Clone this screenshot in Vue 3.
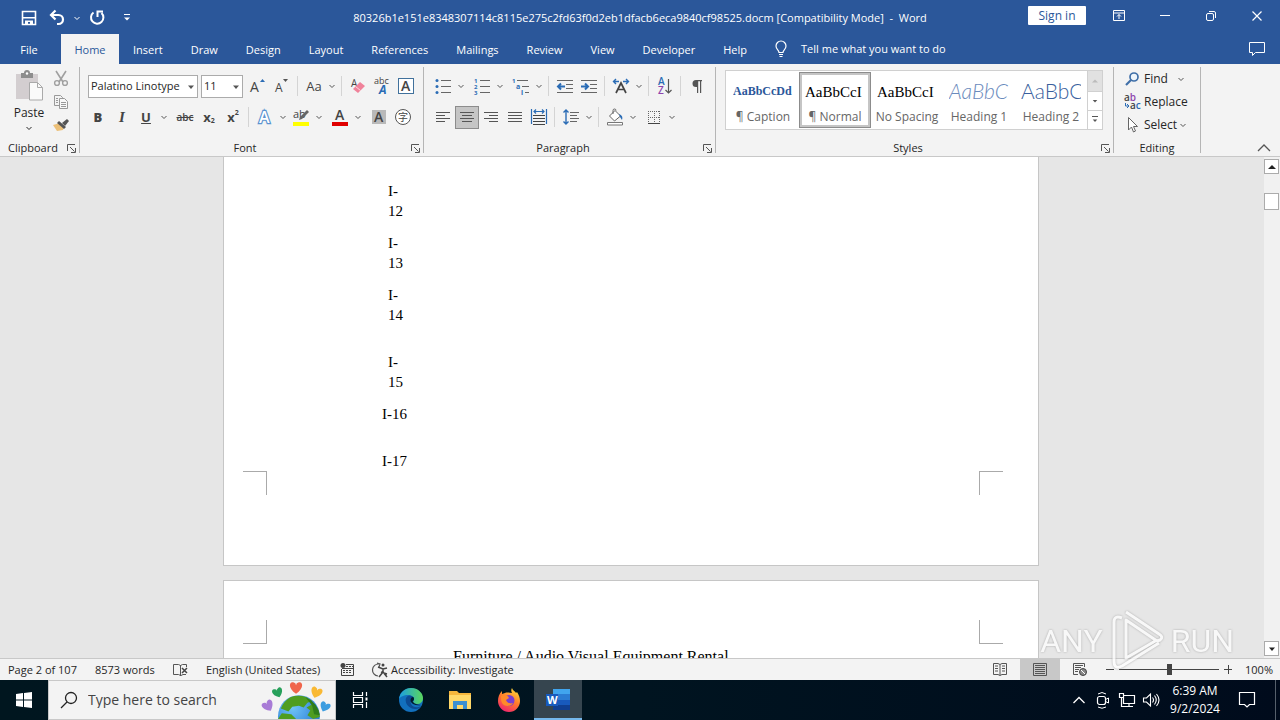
<template>
  <div class="word-app">
    <!-- Gradients stay in a rendered svg, the symbols do not need one -->
    <svg class="paints" aria-hidden="true">
      <defs>
        <radialGradient id="sea" cx=".35" cy=".3" r=".8"><stop offset="0" stop-color="#6fc4f7" /><stop offset="1" stop-color="#1f6fd0" /></radialGradient>
        <linearGradient id="edge-top"><stop offset="0" stop-color="#1b9de2" /><stop offset="1" stop-color="#5bd75c" /></linearGradient>
        <linearGradient id="fox" x1=".8" y1="0" x2=".3" y2="1"><stop offset="0" stop-color="#ffe03a" /><stop offset=".5" stop-color="#ff7a2b" /><stop offset="1" stop-color="#f0246f" /></linearGradient>
      </defs>
    </svg>

    <!-- Shared icon shapes -->
    <svg class="sprite" aria-hidden="true">
      <symbol id="chev" viewBox="0 0 8 8"><path d="M1.5 3 4 5.500 6.500 3" fill="none" stroke="currentColor" /></symbol>
      <symbol id="caret" viewBox="0 0 8 8"><path d="M1 2.500h6L4 6z" fill="currentColor" /></symbol>
      <symbol id="caret-up" viewBox="0 0 8 8"><path d="M0 6h8L4 2z" fill="currentColor" /></symbol>
      <symbol id="launcher" viewBox="0 0 9 9">
        <path d="M.5 7V.5H8M3 3l4.500 4.500M8.500 4v4.500H4" fill="none" stroke="#555" />
      </symbol>

      <symbol id="save" viewBox="0 0 20 20">
        <path d="M3.500 3.500h13v13h-13z" fill="none" stroke="#fff" stroke-width="1.600" />
        <path d="M4 9h12v1.600H4zM6 12.500h8V16h-3v-2H9v2H6z" fill="#fff" />
      </symbol>
      <symbol id="undo" viewBox="0 0 20 20">
        <path d="M8.500 2.500 4 7l4.500 4.500M4.500 7h7a4.500 4.500 0 0 1 0 9H10" fill="none" stroke="#fff" stroke-width="2.200" />
      </symbol>
      <symbol id="redo" viewBox="0 0 20 20">
        <path d="M6.500 4.500a6.200 6.200 0 1 0 8 .500M10.500 9V3.500H16" fill="none" stroke="#fff" stroke-width="2" />
      </symbol>
      <symbol id="customise" viewBox="0 0 8 8"><path d="M1 .5h6" stroke="#fff" /><path d="M1 3.500h6L4 6.500z" fill="#fff" /></symbol>

      <symbol id="ribbon-opts" viewBox="0 0 20 20">
        <path d="M4.500 4.500h11v10h-11zM4.500 7h11M10 13V8.500M8 10.500l2-2 2 2" fill="none" stroke="#fff" />
      </symbol>
      <symbol id="minimise" viewBox="0 0 20 20"><path d="M5 9.500h10" stroke="#fff" /></symbol>
      <symbol id="restore" viewBox="0 0 20 20">
        <rect x="5.500" y="7.500" width="7" height="7" rx="1.500" fill="none" stroke="#fff" />
        <path d="M8 5.500h5a1.500 1.500 0 0 1 1.500 1.500v5" fill="none" stroke="#fff" />
      </symbol>
      <symbol id="close" viewBox="0 0 20 20"><path d="m5.500 5.500 9 9m0-9-9 9" stroke="#fff" stroke-width="1.200" /></symbol>
      <symbol id="bulb" viewBox="0 0 20 20">
        <path d="M8 13.500c0-2.500-3-3-3-6.500a5 5 0 0 1 10 0c0 3.500-3 4-3 6.500zM8 15.500h4M8.500 17.500h3" fill="none" stroke="#fff" stroke-width="1.200" />
      </symbol>
      <symbol id="comment" viewBox="0 0 20 20">
        <path d="M2.500 3.500h15v10h-9l-3 3v-3h-3z" fill="none" stroke="#fff" />
      </symbol>

      <symbol id="paste" viewBox="0 0 30 32">
        <path d="M2 4h22v25H2z" fill="#d3ced0" />
        <path d="M7 3h3a3 3 0 0 1 6 0h3v5H7z" fill="#8d8d8d" />
        <circle cx="13" cy="3.500" r="1.200" fill="#fff" />
        <path d="M15.500 12.500h8l5 5v12.500h-13z" fill="#fafafa" stroke="#aaa" />
        <path d="M23.500 12.500v5h5" fill="none" stroke="#aaa" />
      </symbol>
      <symbol id="cut" viewBox="0 0 20 20">
        <path d="m5 2 7 11m3-11L8 13" stroke="#a0a0a0" stroke-width="1.600" />
        <circle cx="6" cy="14" r="2.400" fill="none" stroke="#a0a0a0" stroke-width="1.400" />
        <circle cx="14" cy="14" r="2.400" fill="none" stroke="#a0a0a0" stroke-width="1.400" />
      </symbol>
      <symbol id="copy" viewBox="0 0 20 20">
        <path d="M3.500 3.500h6l2 2v8h-8z" fill="#f3f3f3" stroke="#999" />
        <path d="M8.500 6.500h5l3 3v7h-8z" fill="#f8f8f8" stroke="#999" />
        <path d="M5 6.500h2M5 8.500h2M5 10.500h2M10 10.500h5M10 12.500h5M10 14.500h5" stroke="#999" />
      </symbol>
      <symbol id="painter" viewBox="0 0 20 20">
        <path d="m2 10 4 6 6-1 1-4-4-3z" fill="#ecc078" />
        <path d="m8 6 7 6-2 2-7-6z" fill="#555" />
        <path d="m11 8 5-4 2 2-4 5z" fill="#555" />
      </symbol>

      <symbol id="grow" viewBox="0 0 20 20">
        <text x="2" y="16" font-size="14" fill="#444">A</text><path d="M12 6h5l-2.500-3z" fill="#2b6cb5" />
      </symbol>
      <symbol id="shrink" viewBox="0 0 20 20">
        <text x="3" y="16" font-size="12" fill="#444">A</text><path d="M11 3h5l-2.500 3z" fill="#555" />
      </symbol>
      <symbol id="clear" viewBox="0 0 20 20">
        <text x="3" y="11" font-size="10" fill="#444">A</text>
        <path d="m12 6 5 4-7 7-5-4z" fill="#f0829a" />
        <path d="m7.500 10.500 5 4" stroke="#fbd5dc" />
      </symbol>
      <symbol id="phonetic" viewBox="0 0 20 20">
        <text x="2" y="8" font-size="9" fill="#444">abc</text>
        <text x="7" y="18" font-size="12" font-weight="700" font-style="italic" fill="#2b6cb5">A</text>
      </symbol>
      <symbol id="char-border" viewBox="0 0 20 20">
        <rect x="2.500" y="2.500" width="15" height="15" fill="#fff" stroke="#41719c" />
        <text x="5" y="15" font-size="14" font-weight="600" fill="#444">A</text>
      </symbol>
      <symbol id="effects" viewBox="0 0 20 20">
        <text x="4" y="16" font-size="16" font-weight="600" fill="#fff" stroke="#5b93d0" stroke-width="2.400" paint-order="stroke">A</text>
      </symbol>
      <symbol id="highlight" viewBox="0 0 20 20">
        <text x="2" y="11" font-size="11" fill="#444">ab</text>
        <path d="m8 13 1-3 7-7 2 2-7 7z" fill="#666" /><path d="M2 15h16v4H2z" fill="#ff0" />
      </symbol>
      <symbol id="font-colour" viewBox="0 0 20 20">
        <text x="5" y="13" font-size="14" font-weight="600" fill="#444">A</text><path d="M2 15h16v4H2z" fill="#e00000" />
      </symbol>
      <symbol id="shading" viewBox="0 0 20 20">
        <path d="M3 3h14v14H3z" fill="#b9b9b9" /><text x="5" y="15" font-size="14" font-weight="600" fill="#444">A</text>
      </symbol>
      <symbol id="enclose" viewBox="0 0 20 20">
        <circle cx="10" cy="10" r="7.500" fill="#fff" stroke="#555" /><text x="5" y="14" font-size="10" fill="#444">字</text>
      </symbol>

      <symbol id="bullets" viewBox="0 0 20 20">
        <path d="M8 4.500h10M8 10.500h10M8 16.500h10" stroke="#666" />
        <circle cx="4" cy="4.500" r="1.500" fill="#2b6cb5" /><circle cx="4" cy="10.500" r="1.500" fill="#2b6cb5" /><circle cx="4" cy="16.500" r="1.500" fill="#2b6cb5" />
      </symbol>
      <symbol id="numbers" viewBox="0 0 20 20">
        <path d="M8 4.500h10M8 10.500h10M8 16.500h10" stroke="#666" />
        <text x="2" y="7" font-size="6" font-weight="700" fill="#2b6cb5">1</text>
        <text x="2" y="13" font-size="6" font-weight="700" fill="#2b6cb5">2</text>
        <text x="2" y="19" font-size="6" font-weight="700" fill="#2b6cb5">3</text>
      </symbol>
      <symbol id="multi" viewBox="0 0 20 20">
        <path d="M6 4.500h11M11 10.500h7M14 16.500h4" stroke="#666" />
        <text x="1" y="7" font-size="6" font-weight="700" fill="#2b6cb5">1</text>
        <text x="5" y="13" font-size="7" font-weight="700" fill="#2b6cb5">a</text>
        <text x="10" y="19" font-size="7" font-weight="700" fill="#2b6cb5">i</text>
      </symbol>
      <symbol id="outdent" viewBox="0 0 20 20">
        <path d="M2 4.500h16M11 8.500h7M11 12.500h7M2 16.500h16" stroke="#666" />
        <path d="M10 10.500H3.500M6 7.500l-3 3 3 3" fill="none" stroke="#2b6cb5" stroke-width="2" />
      </symbol>
      <symbol id="indent" viewBox="0 0 20 20">
        <path d="M2 4.500h16M11 8.500h7M11 12.500h7M2 16.500h16" stroke="#666" />
        <path d="M2 10.500h6.500M6 7.500l3 3-3 3" fill="none" stroke="#2b6cb5" stroke-width="2" />
      </symbol>
      <symbol id="asian" viewBox="0 0 20 20">
        <path d="m5 17 5-10 5 10M7 13.500h6" fill="none" stroke="#444" stroke-width="1.700" />
        <path d="M8 5.500H3M5 3 2.500 5.500 5 8M12 5.500h5M15 3l2.500 2.500L15 8" fill="none" stroke="#2b6cb5" stroke-width="1.400" />
      </symbol>
      <symbol id="sort" viewBox="0 0 20 20">
        <text x="3" y="9" font-size="10" font-weight="600" fill="#2b6cb5">A</text>
        <text x="3" y="18" font-size="10" font-weight="600" fill="#8e44ad">Z</text>
        <path d="M13.500 3v14M10.500 14l3 3 3-3" fill="none" stroke="#555" stroke-width="1.200" />
      </symbol>
      <symbol id="pilcrow" viewBox="0 0 20 20">
        <path d="M15 4H9a3.500 3.500 0 0 0 0 7h1v6h1.200V5.200H13V17h1.200V5.200H15z" fill="#555" />
      </symbol>
      <symbol id="left" viewBox="0 0 20 20"><path d="M3 5.500h14M3 8.500h9M3 11.500h14M3 14.500h9" stroke="#555" /></symbol>
      <symbol id="center" viewBox="0 0 20 20"><path d="M3 5.500h14M5 8.500h10M3 11.500h14M5 14.500h10" stroke="#555" /></symbol>
      <symbol id="right" viewBox="0 0 20 20"><path d="M3 5.500h14M8 8.500h9M3 11.500h14M8 14.500h9" stroke="#555" /></symbol>
      <symbol id="justify" viewBox="0 0 20 20"><path d="M3 5.500h14M3 8.500h14M3 11.500h14M3 14.500h14" stroke="#555" /></symbol>
      <symbol id="distribute" viewBox="0 0 20 20">
        <path d="M2.500 2v15M17.500 2v15M5 4.500h10M7 2.500l-2 2 2 2M13 2.500l2 2-2 2" fill="none" stroke="#2b6cb5" stroke-width="1.200" />
        <path d="M4 8.500h12M4 11.500h12M4 14.500h12M4 17.500h12" stroke="#444" />
      </symbol>
      <symbol id="spacing" viewBox="0 0 20 20">
        <path d="M9 5.500h9M9 8.500h7M9 11.500h9M9 14.500h7" stroke="#666" />
        <path d="M5 3v14M2.500 5.500 5 3l2.500 2.500M2.500 14.500 5 17l2.500-2.500" fill="none" stroke="#2b6cb5" stroke-width="1.400" />
      </symbol>
      <symbol id="bucket" viewBox="0 0 20 20">
        <path d="m4.500 9 5.500-5.500 5.500 5.500-6 5z" fill="#fff" stroke="#666" /><path d="M8 7V3.500a1.500 1.500 0 0 1 3 0" fill="none" stroke="#666" />
        <path d="M14 7c3 1 4 3 3 6l-2-3z" fill="#2b6cb5" /><path d="M2.500 15.500h15v2.500h-15z" fill="#fff" stroke="#777" />
      </symbol>
      <symbol id="borders" viewBox="0 0 20 20">
        <path d="M4 4.500h12M4 10.500h12M4.500 4v13M10.500 4v13M15.500 4v13" stroke="#666" stroke-dasharray="1 1" /><path d="M4 16.500h12" stroke="#444" />
      </symbol>

      <symbol id="find" viewBox="0 0 20 20">
        <circle cx="12" cy="8" r="4" fill="#eef5fb" stroke="#3f6fa8" stroke-width="1.700" /><path d="m9 11-5 5" stroke="#3f6fa8" stroke-width="2.200" />
      </symbol>
      <symbol id="replace" viewBox="0 0 20 20">
        <text x="2" y="9" font-size="10" font-weight="600" fill="#444">a<tspan fill="#8e44ad">b</tspan></text>
        <text x="8" y="17" font-size="10" font-weight="600" fill="#444">a<tspan fill="#2b6cb5">c</tspan></text>
        <path d="M3.500 11v3h3M5 12l2 2-2 2" fill="none" stroke="#2b6cb5" />
      </symbol>
      <symbol id="select" viewBox="0 0 20 20">
        <path d="M6.500 2.500v12.500l3-3 2 5 2-1-2-4.500h4z" fill="#fff" stroke="#666" />
      </symbol>
      <symbol id="collapse" viewBox="0 0 16 10"><path d="m2 8 6-6 6 6" fill="none" stroke="#555" stroke-width="1.300" /></symbol>

      <symbol id="proof" viewBox="0 0 20 20">
        <path d="M9.500 5v11M9.500 15.500l-2-1h-5v-10h5l2 1 2-1h4V7" fill="none" stroke="#555" /><path d="m11 8 5 5m0-5-5 5" stroke="#444" stroke-width="1.500" />
        <path d="M10 15.500l2-1h3" stroke="#555" fill="none" />
      </symbol>
      <symbol id="macro" viewBox="0 0 20 20">
        <circle cx="6" cy="5.500" r="2.500" fill="#444" />
        <path d="M9 4.500h7.500v11h-12V9M5 8.500h11" fill="none" stroke="#444" /><path d="M6 10.500h9M6 12.500h9M9 6.500h7" stroke="#444" stroke-dasharray="2 1" />
      </symbol>
      <symbol id="a11y" viewBox="0 0 20 20">
        <path d="M8 4a6 6 0 0 0-1 12M6 3l3 1-1 3" fill="none" stroke="#555" stroke-width="1.200" />
        <circle cx="12" cy="5" r="1.500" fill="#444" />
        <path d="m7 7 5 2 4-1M12 9v3M8 17l4-5 4 5M10 12l6 2" fill="none" stroke="#444" stroke-width="1.500" />
      </symbol>
      <symbol id="read" viewBox="0 0 20 20">
        <path d="M10 4.500v11l-2-1H3.500v-11H8l2 1 2-1h4.500v11H12l-2 1M5 6h3M5 8.500h3M5 11h3M12 6h3M12 8.500h3M12 11h3" fill="none" stroke="#555" />
      </symbol>
      <symbol id="print" viewBox="0 0 20 20">
        <path d="M3.500 3.500h13v12h-13zM5 5.500h10M5 7.500h10M5 9.500h10M5 11.500h10M5 13.500h10" fill="none" stroke="#555" />
      </symbol>
      <symbol id="web" viewBox="0 0 20 20">
        <path d="M8 14.500H3.500v-11h11V7M5 5.500h8M5 7.500h6M5 9.500h4M5 11.500h3" fill="none" stroke="#555" />
        <circle cx="13" cy="12" r="3.500" fill="#888" stroke="#444" /><path d="m11 10 4 4" stroke="#fff" />
      </symbol>

      <symbol id="windows" viewBox="0 0 16 16"><path d="m0 2 7-1v6.500H0zM8 1l8-1v7.500H8zM0 8.500h7V15l-7-1zM8 8.500h8V16l-8-1z" fill="#fff" /></symbol>
      <symbol id="magnifier" viewBox="0 0 20 20"><circle cx="12" cy="8" r="5.500" fill="none" stroke="#222" stroke-width="1.300" /><path d="m8 12-6 6" stroke="#222" stroke-width="1.300" /></symbol>
      <symbol id="globe" viewBox="0 0 76 40">
        <defs>
          <path id="heart" d="M0 4.500C-8-1-5.500-6.500-2.500-5.500Q0-5 0-3 0-5 2.500-5.500C5.500-6.500 8-1 0 4.500z" />
        </defs>
        <circle cx="40" cy="37" r="22" fill="url(#sea)" />
        <path d="M31 17q8-3 17 0l6 4-5 2-4 5-5-2-7 1-4 5-8-3q3-8 10-12zM55 24q7 6 7 14l-7 2-6-4 3-5-4-3zM22 34l10 1 5 5H18z" fill="#4f9d20" />
        <path d="M47 17q13 6 15 19l-6-1-2-9z" fill="#2f7d1b" />
        <use href="#heart" transform="translate(37 8) scale(1.200)" fill="#f0654c" />
        <use href="#heart" transform="translate(18 13) rotate(-20)" fill="#27a05a" />
        <use href="#heart" transform="translate(58 13) rotate(20) scale(1.100)" fill="#f9b934" />
        <use href="#heart" transform="translate(8 27) rotate(-30) scale(1.100)" fill="#a87bd6" />
        <use href="#heart" transform="translate(67 28) rotate(25)" fill="#3c9de0" />
      </symbol>
      <symbol id="taskview" viewBox="0 0 20 20">
        <path d="M3.500 2v3.500h9V2M3.500 18v-3.500h9V18M3.500 7.500h9v5h-9zM16.500 2v4M16.500 12v6" fill="none" stroke="#fff" stroke-width="1.200" /><path d="M15.500 7.500h2v3h-2z" fill="#fff" />
      </symbol>
      <symbol id="edge" viewBox="0 0 24 24">
        <circle cx="12" cy="12" r="12" fill="#1270bd" />
        <path d="M0 11C1 4 6 0 12 0c7 0 12 5 12 10 0 4-3 6-6 6-2 0-4-1-4-2 1-1 1-2 1-3 0-2-3-4-6-4-4 0-8 2-9 4z" fill="url(#edge-top)" />
        <path d="M15 11c0-2-2-3.500-5-3.500-3 1-4 3.500-3 7s5 6.500 9 6.500 5-1 6-3c-3 2-8 2-10-2-1-2 0-4 3-5z" fill="#0c4b93" />
        <path d="M14 14c-1-1 1-1 1-3 0-1-.5-1.700-1-2-2 0-3 3-2 5s5 4 10 3c-3-.2-6-.500-8-3z" fill="#001a2c" />
      </symbol>
      <symbol id="explorer" viewBox="0 0 24 24">
        <path d="M1 3h8l2 2h12v16H1z" fill="#f5b63c" /><path d="M1 7h22v14H1z" fill="#ffd869" />
        <path d="M5 13h14v8h-4v-4H9v4H5z" fill="#3c8fd0" />
      </symbol>
      <symbol id="firefox" viewBox="0 0 24 24">
        <path d="M15 0c1 3 3 3 4 5l1-1c2 3 3 6 3 9a11 11 0 0 1-22 0c0-4 1-7 4-10v3l3-1c2-1 5 0 7 0-1-2-1-3 0-5z" fill="url(#fox)" />
        <circle cx="12" cy="12.500" r="5.500" fill="#7a3fd0" />
        <path d="M4 8c3-2 7-1 8 2l-3 2c1 3 4 4 7 3-2 4-9 4-11 0-1-2-1-4-1-7z" fill="#ff8a2a" />
      </symbol>
      <symbol id="word" viewBox="0 0 24 24">
        <path d="M7 1h17v6H7z" fill="#41a5ee" /><path d="M7 6h17v6H7z" fill="#2b7cd3" /><path d="M7 12h17v5H7z" fill="#185abd" /><path d="M7 17h17v5H7z" fill="#103f91" />
        <path d="M0 6h12v12H0z" fill="#185abd" /><text x="1" y="16" font-size="11" font-weight="700" fill="#fff">W</text>
      </symbol>
      <symbol id="tray-up" viewBox="0 0 20 20"><path d="m4.500 13 5.500-5.500 5.500 5.500" fill="none" stroke="#fff" stroke-width="1.300" /></symbol>
      <symbol id="meet" viewBox="0 0 20 20">
        <rect x="4.500" y="6.500" width="8" height="8" rx="2" fill="none" stroke="#fff" stroke-width="1.200" />
        <path d="m12.500 9.500 3-1.500v5l-3-1.500M5 4q4-3 8 0M5 17q4 2.500 8 0" fill="none" stroke="#fff" />
      </symbol>
      <symbol id="network" viewBox="0 0 20 20">
        <path d="M7 5.500h10.500v8h-11V8M9 16.500h7M12 13.500v3M2.500 3.500h4v4h-4zM4.500 7.500v9H9" fill="none" stroke="#fff" stroke-width="1.200" />
      </symbol>
      <symbol id="volume" viewBox="0 0 20 20">
        <path d="M2.500 8v4h3l4 4V4l-4 4zM11.500 7.500q2 2.500 0 5M13.500 5.500q3.500 4.500 0 9M15.500 4q5 6 0 12" fill="none" stroke="#fff" stroke-width="1.100" />
      </symbol>
      <symbol id="notify" viewBox="0 0 20 20"><path d="M2.500 2.500h15v12h-5L10 17l-2.500-2.500h-5z" fill="none" stroke="#fff" stroke-width="1.200" /></symbol>
      <symbol id="play" viewBox="0 0 56 64">
        <path d="M17 3 50 25q5 3 1 6L48 32 17 11v38L48 31" fill="none" stroke="#fff" stroke-width="3" stroke-linejoin="round" />
        <path d="M13 9q-8-3-8 4v39q0 9 8 5L50 34" fill="none" stroke="#fff" stroke-width="3" stroke-linejoin="round" />
      </symbol>
    </svg>

    <header class="title-bar">
      <div class="quick-access">
        <button class="qa" aria-label="Save"><svg class="i20"><use href="#save" /></svg></button>
        <button class="qa" aria-label="Undo"><svg class="i20"><use href="#undo" /></svg></button>
        <button class="qa-drop" aria-label="Undo list"><svg class="i8"><use href="#chev" /></svg></button>
        <button class="qa" aria-label="Repeat"><svg class="i20"><use href="#redo" /></svg></button>
        <button class="qa more" aria-label="Customize"><svg class="i8"><use href="#customise" /></svg></button>
      </div>
      <h1>{{ fileName }} [Compatibility Mode]&nbsp; -&nbsp; Word</h1>
      <div class="window-actions">
        <button class="sign-in">Sign in</button>
        <button v-for="w in windowButtons" :key="w" class="win" :aria-label="w"><svg class="i20"><use :href="'#' + w" /></svg></button>
      </div>
    </header>

    <nav class="tabs">
      <button v-for="tab in tabs" :key="tab" class="tab" :class="{ active: tab === activeTab, file: tab === 'File' }" @click="activeTab = tab">{{ tab }}</button>
      <button class="tell-me"><svg class="i20"><use href="#bulb" /></svg>Tell me what you want to do</button>
      <button class="comments" aria-label="Comments"><svg class="i20"><use href="#comment" /></svg></button>
    </nav>

    <section class="ribbon">
      <div class="group clipboard">
        <div class="group-body">
          <button class="paste"><svg><use href="#paste" /></svg>Paste<svg class="i8"><use href="#chev" /></svg></button>
          <div class="stack">
            <button v-for="c in ['cut', 'copy', 'painter']" :key="c" class="tool" :aria-label="c"><svg class="i20"><use :href="'#' + c" /></svg></button>
          </div>
        </div>
        <div class="caption"><span>Clipboard</span><button aria-label="Clipboard settings"><svg><use href="#launcher" /></svg></button></div>
      </div>

      <div class="group font">
        <div class="group-body rows">
          <div class="row first">
            <label class="combo name">
              <select aria-label="Font"><option>Palatino Linotype</option></select>
              <svg class="i8"><use href="#caret" /></svg>
            </label>
            <label class="combo size">
              <select aria-label="Font size"><option>11</option></select>
              <svg class="i8"><use href="#caret" /></svg>
            </label>
            <template v-for="(item, i) in fontTop" :key="i">
              <span v-if="item === '|'" class="sep"></span>
              <button v-else-if="item === 'v'" class="drop" aria-label="More"><svg class="i8"><use href="#chev" /></svg></button>
              <button v-else-if="item === 'case'" class="tool case">Aa</button>
              <button v-else class="tool" :aria-label="item"><svg class="i20"><use :href="'#' + item" /></svg></button>
            </template>
          </div>
          <div class="row">
            <button class="tool glyph"><b>B</b></button>
            <button class="tool glyph italic"><i>I</i></button>
            <button class="tool glyph"><u>U</u></button>
            <button class="drop" aria-label="Underline style"><svg class="i8"><use href="#chev" /></svg></button>
            <span class="gap"></span>
            <button class="tool glyph small"><s>abc</s></button>
            <button class="tool glyph">x<sub>2</sub></button>
            <button class="tool glyph">x<sup>2</sup></button>
            <template v-for="(item, i) in fontBottom" :key="i">
              <span v-if="item === '|'" class="sep"></span>
              <span v-else-if="item === ' '" class="gap"></span>
              <button v-else-if="item === 'v'" class="drop" aria-label="More"><svg class="i8"><use href="#chev" /></svg></button>
              <button v-else class="tool" :aria-label="item"><svg class="i20"><use :href="'#' + item" /></svg></button>
            </template>
          </div>
        </div>
        <div class="caption"><span>Font</span><button aria-label="Font settings"><svg><use href="#launcher" /></svg></button></div>
      </div>

      <div class="group paragraph">
        <div class="group-body rows">
          <div v-for="(row, r) in paragraphRows" :key="r" class="row">
            <template v-for="(item, i) in row" :key="i">
              <span v-if="item === '|'" class="sep"></span>
              <span v-else-if="item === ' '" class="gap"></span>
              <button v-else-if="item === 'v'" class="drop" aria-label="More"><svg class="i8"><use href="#chev" /></svg></button>
              <button v-else class="tool" :class="{ pressed: item === 'center' }" :aria-label="item"><svg class="i20"><use :href="'#' + item" /></svg></button>
            </template>
          </div>
        </div>
        <div class="caption"><span>Paragraph</span><button aria-label="Paragraph settings"><svg><use href="#launcher" /></svg></button></div>
      </div>

      <div class="group styles">
        <div class="group-body">
          <div class="gallery">
            <button v-for="s in styleList" :key="s.label" class="style" :class="[s.kind, { chosen: s.label === '¶ Normal' }]">
              <span class="sample">{{ s.sample }}</span><span class="label">{{ s.label }}</span>
            </button>
            <div class="gallery-scroll">
              <button disabled aria-label="Up"><svg class="i8"><use href="#caret-up" /></svg></button>
              <button aria-label="Down"><svg class="i8"><use href="#caret" /></svg></button>
              <button class="all" aria-label="More styles"><svg class="i8"><use href="#caret" /></svg></button>
            </div>
          </div>
        </div>
        <div class="caption"><span>Styles</span><button aria-label="Styles settings"><svg><use href="#launcher" /></svg></button></div>
      </div>

      <div class="group editing">
        <div class="group-body stack">
          <button class="edit find"><svg class="i20"><use href="#find" /></svg><span>Find</span><svg class="i8"><use href="#chev" /></svg></button>
          <button class="edit"><svg class="i20"><use href="#replace" /></svg><span>Replace</span></button>
          <button class="edit"><svg class="i20"><use href="#select" /></svg><span>Select</span><svg class="i8"><use href="#chev" /></svg></button>
        </div>
        <div class="caption plain"><span>Editing</span></div>
      </div>
      <button class="collapse" aria-label="Collapse the ribbon"><svg><use href="#collapse" /></svg></button>
    </section>

    <main class="workspace">
      <div class="canvas">
        <article class="page page-one">
          <ul>
            <li v-for="line in lines" :key="line.text" :class="{ wide: line.wide, single: line.single }">{{ line.text }}</li>
          </ul>
          <div class="marks bottom"><span></span><span></span></div>
        </article>
        <article class="page page-two">
          <div class="marks top"><span></span><span></span></div>
          <p>Furniture / Audio Visual Equipment Rental</p>
        </article>
      </div>
      <div class="scrollbar">
        <button aria-label="Scroll up"><svg class="i8"><use href="#caret-up" /></svg></button>
        <div class="thumb"></div>
        <button aria-label="Scroll down"><svg class="i8"><use href="#caret" /></svg></button>
      </div>
    </main>

    <footer class="status">
      <span class="pages">Page 2 of 107</span>
      <span class="words">8573 words</span>
      <svg class="i20 proof"><use href="#proof" /></svg>
      <span class="language">English (United States)</span>
      <svg class="i20 macro"><use href="#macro" /></svg>
      <button class="access"><svg class="i20"><use href="#a11y" /></svg>Accessibility: Investigate</button>
      <div class="views">
        <button v-for="v in ['read', 'print', 'web']" :key="v" :class="{ on: v === 'print' }" :aria-label="v"><svg class="i20"><use :href="'#' + v" /></svg></button>
      </div>
      <div class="zoom">
        <button class="minus" aria-label="Zoom out"></button>
        <input v-model="zoom" type="range" min="0" max="200" aria-label="Zoom">
        <button class="minus plus" aria-label="Zoom in"></button>
        <span>{{ zoom }}%</span>
      </div>
    </footer>

    <div class="taskbar">
      <button class="start" aria-label="Start"><svg><use href="#windows" /></svg></button>
      <label class="search">
        <svg class="i20"><use href="#magnifier" /></svg>
        <input type="text" placeholder="Type here to search">
        <svg class="globe"><use href="#globe" /></svg>
      </label>
      <button class="app task-view" aria-label="Task view"><svg class="i20"><use href="#taskview" /></svg></button>
      <button v-for="a in apps" :key="a" class="app" :class="{ running: a === 'word' }" :aria-label="a"><svg><use :href="'#' + a" /></svg></button>
      <div class="tray">
        <button v-for="t in ['tray-up', 'meet', 'network', 'volume']" :key="t" :aria-label="t"><svg class="i20"><use :href="'#' + t" /></svg></button>
        <div class="clock"><span>6:39 AM</span><span>9/2/2024</span></div>
        <button class="notify" aria-label="Notifications"><svg class="i20"><use href="#notify" /></svg></button>
        <span class="peek"></span>
      </div>
    </div>

    <div class="watermark"><span>ANY</span><svg><use href="#play" /></svg><span>RUN</span></div>
  </div>
</template>

<script setup>
import { ref } from 'vue';

const fileName = '80326b1e151e8348307114c8115e275c2fd63f0d2eb1dfacb6eca9840cf98525.docm';
const windowButtons = ['ribbon-opts', 'minimise', 'restore', 'close'];

const tabs = ['File', 'Home', 'Insert', 'Draw', 'Design', 'Layout', 'References', 'Mailings', 'Review', 'View', 'Developer', 'Help'];
const activeTab = ref('Home');
const zoom = ref(100);

// '|' is a divider, 'v' a drop-down arrow, ' ' a small gap
const fontTop = ['grow', 'shrink', '|', 'case', 'v', '|', 'clear', 'phonetic', 'char-border'];
const fontBottom = ['|', 'effects', 'v', 'highlight', 'v', ' ', 'font-colour', 'v', ' ', 'shading', 'enclose'];
const paragraphRows = [
  ['bullets', 'v', ' ', 'numbers', 'v', ' ', 'multi', 'v', '|', 'outdent', 'indent', '|', 'asian', 'v', '|', 'sort', '|', 'pilcrow'],
  ['left', 'center', 'right', 'justify', 'distribute', '|', 'spacing', 'v', '|', 'bucket', 'v', ' ', 'borders', 'v'],
];

const styleList = [
  { sample: 'AaBbCcDd', label: '¶ Caption', kind: 'cap' },
  { sample: 'AaBbCcI', label: '¶ Normal', kind: 'body' },
  { sample: 'AaBbCcI', label: 'No Spacing', kind: 'body' },
  { sample: 'AaBbC', label: 'Heading 1', kind: 'h-one' },
  { sample: 'AaBbC', label: 'Heading 2', kind: 'h-two' },
];

const lines = [
  { text: 'I-\n12' },
  { text: 'I-\n13' },
  { text: 'I-\n14' },
  { text: 'I-\n15', wide: true },
  { text: 'I-16', single: true },
  { text: 'I-17', single: true, wide: true },
];

const apps = ['edge', 'explorer', 'firefox', 'word'];
</script>

<style>
body {
  margin: 0;
  overflow: hidden;
}
</style>

<style scoped>
.word-app {
  position: relative;
  display: flex;
  flex-direction: column;
  height: 100vh;
  overflow: hidden;
  background: #e6e6e6;
  color: #262626;
  font: 12px/16px "Open Sans", "Noto Sans CJK SC", sans-serif;
}

* {
  box-sizing: border-box;
}

button,
input,
select {
  margin: 0;
  padding: 0;
  border: 0;
  background: none;
  color: inherit;
  font: inherit;
}

button {
  display: flex;
  align-items: center;
  justify-content: center;
  flex-shrink: 0;
}

svg {
  display: block;
  flex-shrink: 0;
}

.paints {
  position: absolute;
  width: 0;
  height: 0;
}

.sprite {
  display: none;
}

.i20 {
  width: 20px;
  height: 20px;
}

.i8 {
  width: 8px;
  height: 8px;
}

/* Title bar */
.title-bar {
  display: grid;
  grid-template-columns: 1fr auto 1fr;
  height: 34px;
  background: #2b579a;
  color: #fff;
}

h1 {
  margin: 0;
  font-size: 11px;
  font-weight: 400;
  line-height: 36px;
  white-space: nowrap;
}

.quick-access {
  display: flex;
  align-items: center;
  padding-left: 15px;
}

.qa {
  width: 28px;
  height: 28px;
}

.qa-drop {
  width: 12px;
}

.more {
  margin-left: 2px;
}

.window-actions {
  display: flex;
  justify-content: flex-end;
  height: 31px;
}

.sign-in {
  align-self: center;
  width: 58px;
  height: 19px;
  margin-right: 10px;
  border-radius: 1px;
  background: #fff;
  color: #2b579a;
}

.win {
  width: 46px;
}

/* Tabs */
.tabs {
  display: flex;
  height: 30px;
  background: #2b579a;
  color: #fff;
  font-size: 11px;
}

.tab {
  padding: 2px 14px 0;
}

.tab.file {
  width: 58px;
  margin-right: 3px;
}

.tab.active {
  width: 58px;
  background: #f3f3f3;
  color: #2b579a;
}

.tell-me {
  gap: 10px;
  margin-left: 10px;
}

.comments {
  margin: 0 13px 0 auto;
}

/* Ribbon */
.ribbon {
  display: flex;
  height: 93px;
  border-bottom: 1px solid #c8c8c8;
  background: #f3f3f3;
}

.group {
  display: flex;
  flex-direction: column;
  flex-shrink: 0;
  border-right: 1px solid transparent;
  border-image: linear-gradient(transparent 4px, #b5b5b5 4px, #b5b5b5 88px, transparent 88px) 1;
}

.clipboard {
  width: 80px;
}

.font {
  width: 344px;
}

.paragraph {
  width: 292px;
}

.styles {
  width: 398px;
}

.editing {
  width: 87px;
}

.group-body {
  display: flex;
  flex: 1;
}

.rows {
  flex-direction: column;
  gap: 7px;
  padding: 10px 0 0 6px;
}

.paragraph .rows {
  padding-left: 7px;
}

.row {
  display: flex;
  align-items: center;
  height: 24px;
}

.first {
  padding-left: 2px;
}

.caption {
  display: flex;
  height: 16px;
  padding-right: 3px;
  font-size: 11px;
  text-align: center;
}

.caption span {
  flex: 1;
}

.caption button {
  width: 10px;
}

.caption svg {
  width: 9px;
  height: 9px;
}

.tool {
  width: 24px;
  height: 23px;
  color: #444;
}

.pressed {
  border: 1px solid #8c8c8c;
  background: #c5c5c5;
}

.drop {
  width: 12px;
  height: 23px;
  color: #555;
}

.sep {
  width: 1px;
  height: 20px;
  margin: 0 4px 0 3px;
  background: #d4d4d4;
}

.gap {
  width: 3px;
}

.case {
  font-size: 13px;
}

.glyph {
  font-size: 13px;
  font-weight: 700;
}

.italic {
  font-family: "Liberation Serif", serif;
  font-size: 15px;
}

.small {
  font-size: 10px;
  font-weight: 600;
}

sub,
sup {
  font-size: 7px;
  line-height: 8px;
}

sub {
  margin-top: 8px;
}

sup {
  margin-bottom: 8px;
}

.paste {
  flex-direction: column;
  justify-content: flex-start;
  width: 44px;
  margin: 6px 0 0 7px;
}

.paste svg:first-child {
  width: 30px;
  height: 32px;
  margin-bottom: 3px;
}

.paste .i8 {
  margin-top: 3px;
}

.stack {
  display: flex;
  flex-direction: column;
  padding-top: 3px;
}

.clipboard .stack {
  margin-left: -2px;
}

.combo {
  position: relative;
  height: 23px;
  margin-right: 3px;
}

.combo select {
  width: 100%;
  height: 23px;
  padding-left: 2px;
  border: 1px solid #ababab;
  background: #fff;
  font-size: 11px;
  appearance: none;
}

.combo svg {
  position: absolute;
  top: 8px;
  right: 3px;
  color: #555;
  pointer-events: none;
}

.name {
  width: 110px;
}

.size {
  width: 42px;
}

.gallery {
  display: flex;
  height: 60px;
  margin: 6px 0 0 9px;
  padding-left: 1px;
  border: 1px solid #d0d0d0;
  background: #fff;
}

.style {
  flex-direction: column;
  width: 72px;
  height: 56px;
  margin-top: 1px;
  overflow: hidden;
  border: 3px solid transparent;
}

.chosen {
  outline: 1px solid #8c8c8c;
  outline-offset: -1px;
  border-color: #c5c5c5;
}

.sample {
  flex-shrink: 0;
  width: 60px;
  height: 34px;
  overflow: hidden;
  text-align: left;
  white-space: nowrap;
}

.label {
  line-height: 18px;
  color: #666;
  white-space: nowrap;
}

.cap .sample {
  color: #2b579a;
  font: 700 12px/34px "Liberation Serif", serif;
}

.body .sample {
  color: #000;
  font: 15px/36px "Liberation Serif", serif;
}

.h-one .sample,
.h-two .sample {
  color: #3a5f9e;
  font: 300 21px/34px Lato, sans-serif;
}

.h-one .sample {
  color: #6b8bbd;
  font-style: italic;
}

.gallery-scroll {
  display: grid;
  grid-template-rows: 21px 19px 18px;
  width: 15px;
}

.gallery-scroll button {
  border-left: 1px solid #d0d0d0;
  border-bottom: 1px solid #d0d0d0;
  color: #555;
}

.gallery-scroll button:disabled {
  background: #e1e1e1;
  color: #bbb;
}

.gallery-scroll .i8 {
  width: 6px;
}

.gallery-scroll .all {
  border-bottom: 0;
}

.all svg {
  border-top: 1px solid #555;
}

.edit {
  justify-content: flex-start;
  height: 23px;
  padding-left: 8px;
}

.edit .i8 {
  color: #555;
}

.edit span {
  margin: 0 2px;
}

.find .i8 {
  margin-left: 7px;
}

.plain {
  padding-right: 0;
}

.collapse {
  align-self: flex-end;
  margin: 0 8px 3px auto;
}

.collapse svg {
  width: 16px;
  height: 10px;
}

/* Document area */
.workspace {
  display: flex;
  flex: 1;
  min-height: 0;
}

.canvas {
  flex: 1;
  padding-right: 2px;
  overflow: hidden;
}

.page {
  width: 816px;
  margin: 0 auto;
  border: 1px solid #c6c6c6;
  background: #fff;
  color: #000;
}

.page-one {
  padding: 24px 35px 70px 19px;
  border-top: 0;
}

.page-two {
  height: 400px;
  margin-top: 14px;
  padding: 39px 35px 0 19px;
}

ul {
  margin: 0 0 0 139px;
  padding: 0;
  list-style: none;
  font: 15px/20px "Liberation Serif", serif;
}

li {
  margin-top: 12px;
  padding-left: 6px;
  white-space: pre;
}

li:first-child {
  margin-top: 0;
}

li.single {
  padding-left: 0;
}

li.wide {
  margin-top: 27px;
}

.marks {
  display: flex;
  justify-content: space-between;
}

.marks span {
  width: 24px;
  height: 24px;
  border: 0 solid #aaa;
}

.marks span:first-child {
  border-right-width: 1px;
}

.marks span:last-child {
  border-left-width: 1px;
}

.bottom span {
  border-top-width: 1px;
}

.top span {
  border-bottom-width: 1px;
}

.page-two p {
  margin: 3px 0 0 210px;
  font: 16px/20px "Liberation Serif", serif;
}

.scrollbar {
  display: flex;
  flex-direction: column;
  width: 16px;
  padding: 2px 1px 2px 0;
  background: #f1f1f1;
}

.scrollbar button {
  height: 15px;
  border: 1px solid #ababab;
  background: #fff;
  color: #222;
}

.thumb {
  height: 17px;
  margin: 19px 0 auto;
  border: 1px solid #ababab;
  background: #fff;
}

/* Status bar */
.status {
  display: flex;
  align-items: center;
  height: 22px;
  border-top: 1px solid #c8c8c8;
  background: #f3f3f3;
  font-size: 11px;
  white-space: nowrap;
}

.pages {
  width: 87px;
  padding-left: 8px;
}

.words {
  width: 84px;
  padding-left: 8px;
}

.proof {
  margin-right: 15px;
}

.language {
  width: 131px;
}

.macro {
  margin-right: 14px;
}

.views {
  display: flex;
  align-self: stretch;
  margin-left: auto;
}

.views button {
  width: 40px;
}

.views .on {
  background: #c8c8c8;
}

.zoom {
  display: flex;
  align-items: center;
  padding: 0 7px 0 6px;
}

.minus {
  width: 8px;
  height: 20px;
  background: linear-gradient(#444, #444) center / 8px 1px no-repeat;
}

.plus {
  background: linear-gradient(#444, #444) center / 9px 1px no-repeat, linear-gradient(#444, #444) center / 1px 9px no-repeat;
}

.zoom input {
  width: 100px;
  height: 20px;
  margin: 0 5px;
  background: linear-gradient(#444, #444) center / 100% 1px no-repeat;
  appearance: none;
}

.zoom input::-webkit-slider-thumb {
  width: 5px;
  height: 11px;
  background: #444;
  appearance: none;
}

.zoom span {
  width: 41px;
  text-align: right;
}

/* Taskbar */
.taskbar {
  display: flex;
  height: 40px;
  background: linear-gradient(90deg, #00161f, #001420 50%, #000b1c);
  color: #fff;
}

.start,
.app {
  width: 48px;
  margin-right: 1px;
}

.start {
  margin-right: 0;
}

.task-view {
  margin-right: 3px;
}

.start svg {
  width: 16px;
  height: 16px;
}

.search {
  display: flex;
  align-items: center;
  width: 288px;
  padding-left: 10px;
  border: 1px solid #c8c8c8;
  background: #f3f3f3;
  color: #333;
}

.search input {
  flex: 1;
  min-width: 0;
  margin-left: 9px;
  font-size: 14px;
}

.search input::placeholder {
  color: #444;
  opacity: 1;
}

.globe {
  width: 76px;
  height: 38px;
}

.app svg:not(.i20) {
  width: 24px;
  height: 24px;
}

.running {
  border-bottom: 2px solid #76b9ed;
  background: #36454f;
}

.running svg {
  margin-top: 2px;
}

.tray {
  display: flex;
  margin-left: auto;
}

.tray button {
  width: 24px;
}

.clock {
  display: flex;
  flex-direction: column;
  justify-content: center;
  width: 56px;
  margin-left: 4px;
  line-height: 18px;
  text-align: center;
}

.tray .notify {
  width: 48px;
}

.peek {
  width: 5px;
  margin-left: 4px;
  border-left: 1px solid #56606c;
}

.watermark {
  position: absolute;
  right: 46px;
  bottom: 47px;
  display: flex;
  align-items: center;
  gap: 6px;
  color: #fff;
  font: 400 32px/64px Roboto, sans-serif;
  opacity: 0.75;
  filter: drop-shadow(0 0 1px #999);
  pointer-events: none;
}

.watermark svg {
  width: 56px;
  height: 64px;
}
</style>
